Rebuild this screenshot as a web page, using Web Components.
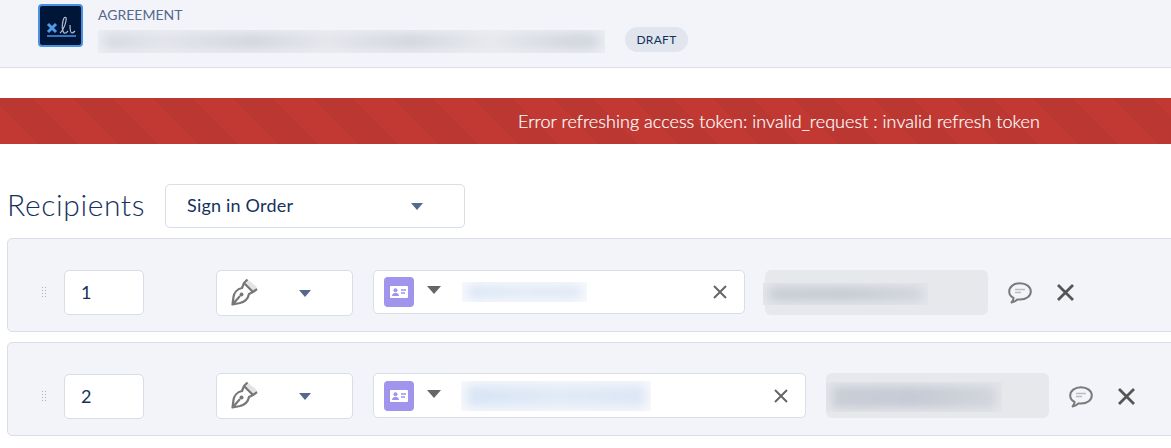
<!DOCTYPE html>
<html><head><meta charset="utf-8">
<style>
html,body{margin:0;padding:0;background:#fff;overflow:hidden;width:1171px;height:448px;font-family:Lato,"Liberation Sans",sans-serif;color:#16325c}
x-recipient-row + x-recipient-row{margin-top:10px}
</style></head><body>
<template id="t-header"><style>
:host{display:flex;box-sizing:border-box;height:68px;background:#f3f4f9;border-bottom:1px solid #dcdfe8;padding:4px 0 0 38px;gap:15px}
.logo{box-sizing:border-box;width:45px;height:43px;background:#001639;border:2px solid #4a90e2;border-radius:4px;display:block}
.logo svg{display:block}
.info{display:flex;flex-direction:column}
.type{font-size:14px;line-height:22px;color:#54698d}
.line{display:flex;align-items:flex-start;gap:20px;margin-top:4px}
.pill{box-sizing:border-box;height:25px;width:63px;margin-top:-3px;border-radius:13px;background:#e0e5ee;color:#16325c;font-size:12px;letter-spacing:.3px;display:flex;align-items:center;justify-content:center}
x-blur{width:507px;height:23px;--r:6px;--base:#eceef3;--ink:linear-gradient(90deg,#d3d6de,#e1e3e9 12%,#cfd3dc 30%,#e3e5ea 45%,#d0d3dc 62%,#e6e8ec 78%,#cfd3dc 94%)}
</style>
<div class="logo"><svg width="41" height="39" viewBox="0 0 41 39">
<path d="M8 18l8 8M16 18l-8 8" stroke="#4f9be8" stroke-width="3" fill="none"/>
<path d="M20 27c2-1 5-7 6-12 1-5-2-5-3 0-1 4-1 9 1 12 2 1 3-1 4-2M30 19c0 4 0 8 2 8 1 0 2-1 3-2" stroke="#b5c0d3" stroke-width="1.2" fill="none"/>
<path d="M7 30h29" stroke="#3a72bd" stroke-width="2" fill="none"/></svg></div>
<div class="info"><div class="type">AGREEMENT</div>
<div class="line"><x-blur></x-blur><div class="pill">DRAFT</div></div></div>
</template>

<template id="t-blur"><style>
:host{display:block;position:relative;overflow:hidden;background:var(--base,#eee);flex:none}
i{position:absolute;inset:4px 6px;background:var(--ink,#ccc);filter:blur(var(--r,4px));display:block;border-radius:4px}
</style><i></i></template>

<template id="t-banner"><style>
:host{display:flex;align-items:center;box-sizing:border-box;height:46px;margin-top:30px;padding-left:518px;color:#fff;font-size:18px;font-weight:300;letter-spacing:.04px;-webkit-text-stroke:.2px #fff;white-space:nowrap;
background-color:#c23934;background-image:linear-gradient(45deg,rgba(0,0,0,.045) 25%,transparent 25%,transparent 50%,rgba(0,0,0,.045) 50%,rgba(0,0,0,.045) 75%,transparent 75%,transparent);background-size:80px 80px;background-position:-7px 0}
</style><slot></slot></template>

<template id="t-select"><style>
:host{display:flex;align-items:center;box-sizing:border-box;background:#fff;border:1px solid #d8dde6;border-radius:5px;flex:none}
.c{width:0;height:0;border-left:6.500px solid transparent;border-right:6.500px solid transparent;border-top:7px solid #54698d;flex:none;margin-left:auto}
</style><slot></slot><span class="c" part="caret"></span></template>

<template id="t-head"><style>
:host{display:flex;align-items:center;margin:40px 0 10px 7px;gap:20px}
h2{margin:-4px 0 0;font-size:30px;font-weight:300;color:#16325c;line-height:44px;width:138px;white-space:nowrap;letter-spacing:.62px}
x-select{width:300px;height:44px;padding:0 41px 0 21px;font-size:18px;letter-spacing:.2px;color:#16325c;line-height:42px}
span{display:block;margin-top:-2px}
</style><h2><slot></slot></h2><x-select><span>Sign in Order</span></x-select></template>

<template id="t-row"><style>
:host{display:flex;align-items:flex-start;box-sizing:border-box;height:94px;margin:0 -8px 0 7px;padding:calc(31px - var(--d,0px)) 0 0 33px;background:#f3f4f9;border:1px solid #d8dde6;border-radius:5px}
.grip{width:6px;height:12px;flex:none;margin:calc(16px + var(--d,0px)) 17px 0 0;background-image:radial-gradient(circle,#a9adb6 .8px,transparent 1px);background-size:3px 3px}
.num{box-sizing:border-box;width:80px;height:45px;margin-top:var(--d,0px);background:#fff;border:1px solid #d8dde6;border-radius:5px;padding-left:16px;font-size:18px;line-height:43px;color:#16325c;flex:none}
x-select{width:137px;height:46px;margin-left:72px;padding:0 41px 0 14px}
x-select svg{display:block}
.look{box-sizing:border-box;height:calc(44px + var(--d,0px));margin-left:20px;background:#fff;border:1px solid #d8dde6;border-radius:5px;display:flex;align-items:center;padding:0 16px 0 10px;flex:none}
.badge{width:30px;height:30px;background:#a094ed;border-radius:4px;flex:none;display:flex;align-items:center;justify-content:center}
.tri{width:0;height:0;border-left:7px solid transparent;border-right:7px solid transparent;border-top:8px solid #666;margin:-4px 0 0 13px;flex:none}
.look x-blur{--base:#f6f8fc;--r:5px;--ink:linear-gradient(90deg,#d9e5f5,#e1eaf6 50%,#dde7f5)}
.clr{margin-left:auto;flex:none;display:block}
.mail{box-sizing:border-box;width:223px;height:45px;margin-left:20px;background:#e6e8ec;border-radius:6px;flex:none;display:flex;align-items:center}
.mail x-blur{margin:2px 0 0 calc(-2px + 2 * var(--d,0px));--base:#e3e5ea;--r:5px;--ink:linear-gradient(90deg,#c9cdd6,#c6cad4 50%,#d2d5dc)}
.cmt{margin:calc(12px + var(--d,0px)) 0 0 20px;flex:none;display:block}
.del{margin:calc(13px + var(--d,0px)) 0 0 24px;flex:none;display:block}
</style>
<span class="grip"></span><div class="num"></div>
<x-select><svg width="28" height="28" viewBox="0 0 28 28"><path d="M17 1l9 7-5 5-7-7z" fill="#e3e3e3"/><path d="M13 4l9 9-4 2c-1 5-5 8-9 9l-7.500 1.500L2.500 18C3 14 6 10 11 9zM2 25l7-8M16.500 .5L13 4M26 10l-4 3" stroke="#777" stroke-width="2.200" fill="none" stroke-linejoin="round"/><circle cx="10.500" cy="15.500" r="2" fill="#777"/></svg></x-select>
<div class="look"><span class="badge"><svg width="20" height="16" viewBox="0 0 20 16"><rect x="1" y="2" width="18" height="12" rx="1" fill="#fff"/><circle cx="6.500" cy="6.200" r="2" fill="#a094ed"/><path d="M3 12c0-2.500 2-3 3.500-3s3.500.5 3.500 3z" fill="#a094ed"/><path d="M12 6h5M12 9h4" stroke="#a094ed" stroke-width="1.500"/></svg></span><span class="tri"></span><x-blur class="lb"></x-blur>
<svg class="clr" width="16" height="16" viewBox="0 0 16 16"><path d="M2 2l12 12M14 2L2 14" stroke="#666" stroke-width="2" fill="none"/></svg></div>
<div class="mail"><x-blur class="mb"></x-blur></div>
<svg class="cmt" width="24" height="22" viewBox="0 0 24 22"><path d="M12 1.200C5.800 1.200 1.200 4.800 1.200 9.500c0 2.800 1.600 5 4.400 6.400-.1 1.600-.8 3-2 4.500 2.400-.3 4.500-1.400 5.800-3 .9.2 1.700.2 2.600.2 6.200 0 10.800-3.500 10.800-8.100S18.200 1.200 12 1.200z" fill="none" stroke="#7a7a7a" stroke-width="2" stroke-linejoin="round"/><path d="M7 7.500h10M7 10.500h6" stroke="#bbb" stroke-width="1.600"/></svg>
<svg class="del" width="19" height="19" viewBox="0 0 19 19"><path d="M2 2l15 15M17 2L2 17" stroke="#555" stroke-width="2.800" fill="none"/></svg>
</template>

<x-header></x-header>
<x-banner>Error refreshing access token: invalid_request : invalid refresh token</x-banner>
<x-recipients-head>Recipients</x-recipients-head>
<x-recipient-row look="372" order="1" lb="125,20,21" mb="165,22"></x-recipient-row>
<x-recipient-row look="433" order="2" lb="190,30,20" mb="176,30" style="--d:1px"></x-recipient-row>

<script>
const mk=(n,id,extra)=>customElements.define(n,class extends HTMLElement{
  constructor(){super();this.attachShadow({mode:'open'}).appendChild(document.getElementById(id).content.cloneNode(true));}
  connectedCallback(){extra&&extra(this,this.shadowRoot);}
});
mk('x-blur','t-blur');
mk('x-select','t-select');
mk('x-header','t-header');
mk('x-banner','t-banner');
mk('x-recipients-head','t-head');
mk('x-recipient-row','t-row',(h,s)=>{
  s.querySelector('.num').textContent=h.getAttribute('order');
  s.querySelector('.look').style.width=h.getAttribute('look')+'px';
  const [w,ht,ml]=h.getAttribute('lb').split(',');
  s.querySelector('.lb').style.cssText=`width:${w}px;height:${ht}px;margin-left:${ml}px`;
  const [mw,mh]=h.getAttribute('mb').split(',');
  const mb=s.querySelector('.mb');mb.style.width=mw+'px';mb.style.height=mh+'px';
});
</script>
</body></html>
